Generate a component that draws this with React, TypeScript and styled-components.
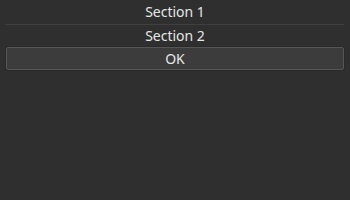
import styled, { createGlobalStyle } from "styled-components";

const GlobalStyle = createGlobalStyle`
  html, body {
    margin: 0;
    padding: 0;
    background: #2f2f2f;
  }
  body {
    width: 350px;
    height: 200px;
    overflow: hidden;
    font-family: "Noto Sans", sans-serif;
  }
`;

const Panel = styled.div`
  display: flex;
  flex-direction: column;
  padding: 0 6px;
`;

const SectionTitle = styled.div<{ $h: number }>`
  height: ${(p) => p.$h}px;
  line-height: ${(p) => p.$h}px;
  text-align: center;
  color: #e6e6e6;
  font-size: 14px;
`;

const Separator = styled.div`
  height: 1px;
  background: #3f3f3f;
  margin: 0 0 0 -1px;
`;

const Button = styled.button`
  height: 23px;
  border: 1px solid #565656;
  border-radius: 2px;
  background: #3c3c3c;
  color: #e6e6e6;
  font-family: "Noto Sans", sans-serif;
  font-size: 14px;
  line-height: 20px;
  padding: 0;
  box-shadow: 0 0 0 1px #2a2a2a;
`;

export default function App() {
  return (
    <>
      <GlobalStyle />
      <Panel>
        <SectionTitle $h={24}>Section 1</SectionTitle>
        <Separator />
        <SectionTitle $h={22}>Section 2</SectionTitle>
        <Button>OK</Button>
      </Panel>
    </>
  );
}
